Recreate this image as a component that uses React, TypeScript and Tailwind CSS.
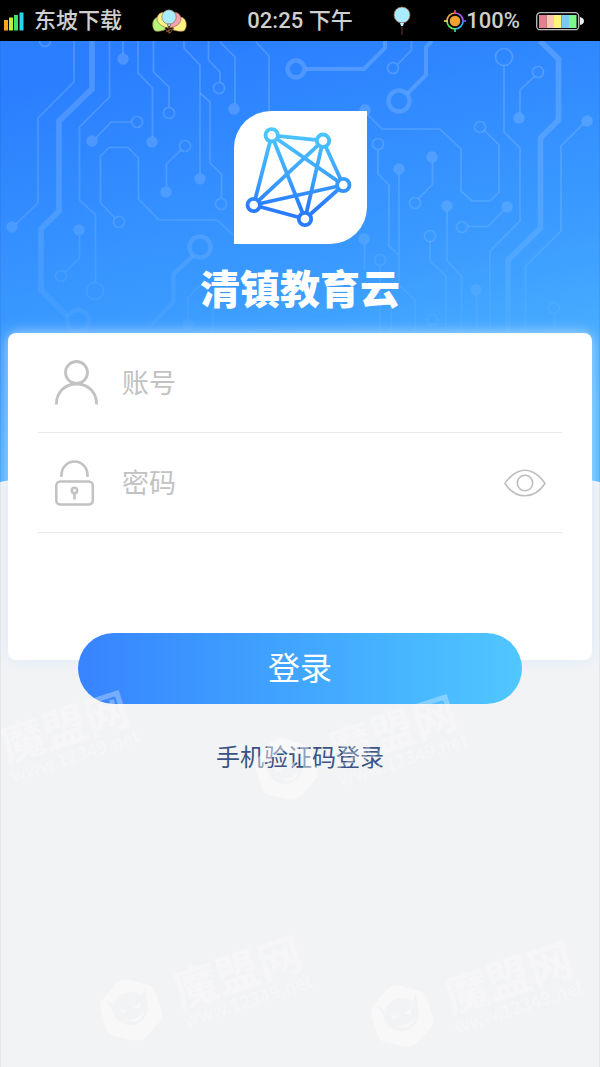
import { useState } from "react";

const traces = [
  "M74 41V82L38 118V203L16 224",
  "M109.500 41V97L79.500 127V200L95.500 215V282",
  "M123 41V54",
  "M138 41V73L152.500 88V137",
  "M153.500 41V72L169 87V107",
  "M131 122H111L96 138",
  "M184 41V48L200 65V174",
  "M200 93L210 102V163L221.500 174V198",
  "M208.500 41V60L220 72V82",
  "M220 42L235 57V104",
  "M256 42L269 56V112",
  "M181 150L166.500 164V186",
  "M115 218L100.500 203V156L109 147.500H128L138.500 158V199L159 220H217L233 235",
  "M79.500 236V258L65 272",
  "M200 285L188 298V320",
  "M213 306V333",
  "M411.500 41V50L398 64",
  "M367 114L382 129H440L461 149V191L472 201H490L499 192V145L484 130",
  "M504 66V132L520 148V221L490 251V333",
  "M534 77L520 90V113",
  "M583 124L561 146V231L525.500 266V333",
  "M378 150V174L389 185V246L399 255",
  "M399 174V285L415 300V333",
  "M432.500 162V184.500L418 199",
  "M447 211V261L461.500 276V333",
  "M503 211L488 226.500H468",
  "M430 241V261L446 276V333",
  "M476.500 295V333",
  "M554.500 314V333",
  "M364.500 244V270",
  "M380 266V333",
  "M391 300V333",
];

const wideTraces = [
  "M92 41V89L59 121V211L41 229V290L68 317",
  "M193 256L173.500 274V302L152 324",
  "M306 69H364L385 48V41",
  "M432 41L426 47V75L408 93",
  "M540 41L558.500 59V120L540.500 138V228L508 260V333",
];

const dots = [
  [12, 227], [123, 59], [152, 142], [92, 141], [200, 179], [234, 109], [166, 192],
  [79, 230], [188, 325], [365, 110], [519, 118], [587, 121], [399, 169], [432, 157],
  [447, 206], [507, 207], [476, 290], [364, 239],
];

const rings = [
  [45, 41, 5.5], [169, 113, 5.5], [137, 122, 5.5], [221, 204, 5.5], [219, 88, 5.5],
  [185, 146, 5.5], [119, 222, 5.5], [61, 276, 5.5], [95, 291, 8.5], [393, 68, 5.5],
  [480, 127, 5.5], [504, 57, 8.5], [538, 72, 5.5], [378, 144, 5.5], [415, 203, 5.5],
  [462, 227, 5.5], [430, 236, 5.5], [554, 308, 5.5], [380, 260, 5.5], [432, 320, 5.5],
];

const wideRings = [
  [78, 321, 11], [200, 247, 10.5], [296, 69, 8.5], [399, 101, 10.5],
];

const nodes = [[37.7, 24.3], [89, 29.7], [109.3, 74], [19.7, 94], [71, 108]];

const batteryCells = ["#e57f90", "#f9c6b4", "#fbf57c", "#7cc9f6", "#7cf58c"];

function CircuitBackground() {
  return (
    <svg
      className="absolute inset-x-0 top-0 h-[441px] w-full"
      viewBox="0 41 600 441"
      preserveAspectRatio="none"
      aria-hidden="true"
    >
      <defs>
        <linearGradient id="sky" gradientUnits="userSpaceOnUse" x1="200" y1="41" x2="300" y2="482">
          <stop offset="0" stopColor="#2a7eff" />
          <stop offset="0.55" stopColor="#3a9aff" />
          <stop offset="1" stopColor="#50b8ff" />
        </linearGradient>
        <linearGradient id="trace" gradientUnits="userSpaceOnUse" x1="0" y1="41" x2="0" y2="335">
          <stop offset="0" stopColor="#fff" stopOpacity="0.17" />
          <stop offset="0.6" stopColor="#fff" stopOpacity="0.12" />
          <stop offset="1" stopColor="#fff" stopOpacity="0.03" />
        </linearGradient>
      </defs>
      <path d="M0 41H600V482Q300 420 0 482Z" fill="url(#sky)" />
      <g fill="none" stroke="url(#trace)" strokeWidth="1.700">
        {traces.map((d) => <path key={d} d={d} />)}
        {rings.map(([x, y, r]) => <circle key={`${x}-${y}`} cx={x} cy={y} r={r} />)}
      </g>
      <g fill="none" stroke="url(#trace)">
        {wideTraces.map((d, i) => (
          <path key={d} d={d} strokeWidth={i === 0 || i === 4 ? 5.6 : 4} />
        ))}
        {wideRings.map(([x, y, r]) => (
          <circle key={x} cx={x} cy={y} r={r} strokeWidth="4.300" />
        ))}
      </g>
      <g fill="url(#trace)">
        {dots.map(([x, y]) => <circle key={`${x}-${y}`} cx={x} cy={y} r="5.700" />)}
      </g>
    </svg>
  );
}

function Logo() {
  return (
    <svg className="h-[133px] w-[133px]" viewBox="0 0 133 133" aria-hidden="true">
      <defs>
        <linearGradient id="mesh" gradientUnits="userSpaceOnUse" x1="0" y1="16" x2="0" y2="116">
          <stop offset="0" stopColor="#4ccaff" />
          <stop offset="0.5" stopColor="#3ba3ff" />
          <stop offset="0.8" stopColor="#2a7cff" />
          <stop offset="1" stopColor="#2a7cff" />
        </linearGradient>
      </defs>
      <path d="M37 0H133V96A37 37 0 0 1 96 133H0V37A37 37 0 0 1 37 0Z" fill="#fff" />
      <g stroke="url(#mesh)" strokeWidth="3.800">
        {nodes.map(([x1, y1], i) =>
          nodes.slice(i + 1).map(([x2, y2]) => (
            <line key={`${x1}-${x2}`} x1={x1} y1={y1} x2={x2} y2={y2} />
          ))
        )}
        {nodes.map(([x, y]) => <circle key={x} cx={x} cy={y} r="6.200" fill="#fff" />)}
      </g>
    </svg>
  );
}

function SignalIcon() {
  return (
    <svg className="h-5 w-5" viewBox="0 0 20 20" aria-hidden="true">
      <rect x="0" y="9" width="4" height="10.500" fill="#fba51d" />
      <rect x="5" y="6.500" width="4" height="13" fill="#c5ef2c" />
      <rect x="10" y="4" width="4" height="15.500" fill="#3be56b" />
      <rect x="15.500" y="1.500" width="4" height="18" fill="#28d4ee" />
    </svg>
  );
}

function BalloonBunch() {
  return (
    <svg className="h-[26px] w-[35px]" viewBox="0 0 35 26" aria-hidden="true">
      <g stroke="#8a5a34" strokeWidth="0.600">
        <path d="M13 22C9 23 6 24 3 23C-1 19 0 10 6 9C12 9 14 16 13 22Z" fill="#b4f57c" />
        <path d="M21 22C25 23 28 24 32 23C36 19 35 10 29 9C23 9 20 16 21 22Z" fill="#fdf087" />
        <path d="M16 20C12 19 5 17 5 10C6 4 13 2 17 7Z" fill="#fdf38a" />
        <path d="M18 20C22 19 29 17 29 10C28 4 21 2 17 7Z" fill="#f5a3b3" />
        <circle cx="17" cy="9" r="7.200" fill="#a8ecff" />
        <path d="M15.500 16H18.500V18H15.500Z" fill="#a8ecff" />
        <path d="M17 18V25.500M13 21L18 25L22 20M14 24L20 21" fill="none" strokeWidth="1" />
      </g>
    </svg>
  );
}

function Balloon() {
  return (
    <svg className="ml-10 h-[30px] w-[18px]" viewBox="0 0 18 30" aria-hidden="true">
      <path d="M9 18V29" stroke="#6b3a1e" strokeWidth="1" />
      <circle cx="9" cy="9" r="8" fill="#a8ecff" stroke="#a0643f" strokeWidth="0.800" />
      <path d="M7 17H11L10 20H8Z" fill="#c4f0fa" />
    </svg>
  );
}

function LocationIcon() {
  return (
    <svg className="h-[22px] w-[22px]" viewBox="0 0 22 22" fill="none" aria-hidden="true">
      <g strokeWidth="1.700">
        <path d="M11 3A8 8 0 0 1 19 11" stroke="#b45cf0" />
        <path d="M19 11A8 8 0 0 1 11 19" stroke="#37b7e8" />
        <path d="M11 19A8 8 0 0 1 3 11" stroke="#6fe05a" />
        <path d="M3 11A8 8 0 0 1 11 3" stroke="#f0a04a" />
        <path d="M11 0V4" stroke="#ef4a5c" />
        <path d="M18 11H22" stroke="#6a62f2" />
        <path d="M11 18V22" stroke="#3fe08c" />
        <path d="M0 11H4" stroke="#e3e040" />
      </g>
      <circle cx="11" cy="11" r="5.300" fill="#f6a02c" />
    </svg>
  );
}

function BatteryIcon() {
  return (
    <svg className="mr-4 ml-4 h-5 w-12" viewBox="0 0 48 20" aria-hidden="true">
      <rect x="0.700" y="1.700" width="42" height="17" rx="3.500" fill="none" stroke="#bdbdbd" strokeWidth="1.300" />
      {batteryCells.map((color, i) => (
        <rect key={color} x={3 + i * 7.5} y="4" width="7.500" height="13" fill={color} />
      ))}
      <path d="M44 6Q48 7 48 10Q48 13 44 14Z" fill="#eee" />
    </svg>
  );
}

function StatusBar() {
  return (
    <header className="flex h-[41px] items-center bg-black font-['Roboto','Noto_Sans_CJK_SC',sans-serif] text-[22px] font-medium text-[#cfcfcf]">
      <div className="flex flex-1 items-center">
        <div className="ml-1">
          <SignalIcon />
        </div>
        <span className="mr-[30px] ml-2.5">东坡下载</span>
        <BalloonBunch />
      </div>
      <time>02:25 下午</time>
      <div className="flex flex-1 items-center">
        <Balloon />
        <div className="ml-auto flex items-center">
          <LocationIcon />
          <span>100%</span>
        </div>
        <BatteryIcon />
      </div>
    </header>
  );
}

function UserIcon() {
  return (
    <svg className="h-[45px] w-11" viewBox="0 0 44 45" fill="none" stroke="#c2c2c2" strokeWidth="2.800" aria-hidden="true">
      <circle cx="22.500" cy="12.500" r="11" />
      <path d="M2.400 44.500C2.400 32 11 24 22.500 24S42.600 32 42.600 44.500" />
    </svg>
  );
}

function LockIcon() {
  return (
    <svg className="h-[46px] w-11" viewBox="0 0 44 46" fill="none" stroke="#c2c2c2" strokeWidth="2.500" aria-hidden="true">
      <path d="M7.500 17V15A13 13.500 0 0 1 33.500 15V17" />
      <rect x="2.300" y="21.500" width="36.500" height="23" rx="4" />
      <circle cx="20.500" cy="30.500" r="2.700" />
      <path d="M20.500 33V39.500" />
    </svg>
  );
}

function EyeIcon() {
  return (
    <svg className="h-7 w-[42px]" viewBox="0 0 42 28" fill="none" stroke="#bdbdbd" strokeWidth="1.600" aria-hidden="true">
      <path d="M1 14.500C2 12.500 10 1.200 21 1.200S40 12.500 41 14.500C39 17.500 32 26.800 21 26.800S3 17.500 1 14.500Z" />
      <circle cx="21" cy="14" r="7.700" />
    </svg>
  );
}

function Watermark({ x, y }: { x: number; y: number }) {
  return (
    <g transform={`translate(${x} ${y}) rotate(-18)`} fill="#fff">
      <path
        fillOpacity="0.450"
        fillRule="evenodd"
        d="M-6 -30Q0 -33 6 -30L25 -18Q29 -14 29 -8V12Q28 17 24 20L6 30Q0 33 -6 30L-24 20Q-28 17 -29 12V-8Q-29 -14 -25 -18ZM-15 -10L-20 -18L-18 -3A18 18 0 1 0 18 -3L20 -18L15 -10A18 18 0 0 0 -15 -10Z"
      />
      <path fillOpacity="0.450" d="M-11 -5L-3 -1L-9 1ZM11 -5L3 -1L9 1ZM-11 6Q0 13 11 6Q5 19 -11 6Z" />
      <g fillOpacity="0.320" fontFamily="Noto Sans CJK SC, sans-serif">
        <text x="47" y="13" fontSize="44" fontWeight="700">魔盟网</text>
        <text x="47" y="34" fontSize="18" fontWeight="500">www.12349.net</text>
      </g>
    </g>
  );
}

export default function App() {
  const [showPassword, setShowPassword] = useState(false);

  return (
    <div className="relative flex min-h-screen flex-col overflow-hidden bg-[#f2f3f5] font-['Noto_Sans_CJK_SC',sans-serif]">
      <StatusBar />

      <main className="relative flex-1">
        <CircuitBackground />

        <div className="relative flex flex-col items-center pt-[70px]">
          <Logo />
          <h1 className="mt-[19px] text-[40px] leading-12 font-black text-white">清镇教育云</h1>
        </div>

        <form className="relative mt-[22px]" onSubmit={(e) => e.preventDefault()}>
          <div className="mx-2 rounded-lg bg-white px-[30px] pb-[127px] shadow-[0_0_14px_rgba(214,232,255,0.8)]">
            <div className="flex h-[100px] items-center gap-6 border-b border-[#e9e9e9] pl-4">
              <label htmlFor="account" aria-label="账号">
                <UserIcon />
              </label>
              <input
                id="account"
                type="text"
                placeholder="账号"
                className="min-w-0 flex-1 text-[27px] text-gray-700 outline-none placeholder:text-[#c2c2c2]"
              />
            </div>
            <div className="flex h-[100px] items-center gap-6 border-b border-[#e9e9e9] pr-4 pl-4">
              <label htmlFor="password" aria-label="密码">
                <LockIcon />
              </label>
              <input
                id="password"
                type={showPassword ? "text" : "password"}
                placeholder="密码"
                className="min-w-0 flex-1 text-[27px] text-gray-700 outline-none placeholder:text-[#c2c2c2]"
              />
              <button type="button" aria-label="显示密码" onClick={() => setShowPassword(!showPassword)}>
                <EyeIcon />
              </button>
            </div>
          </div>

          <div className="-mt-[27px] px-[78px]">
            <button
              type="submit"
              className="relative h-[71px] w-full rounded-full bg-linear-to-r from-[#3883ff] to-[#50c7ff] pb-1.5 text-[32px] text-white"
            >
              登录
            </button>
          </div>
        </form>

        <div className="mt-[34px] text-center">
          <a href="#sms" className="text-[24px] text-[#3b5384]">手机验证码登录</a>
        </div>
      </main>

      {/* Watermark layer */}
      <div className="pointer-events-none absolute inset-0 border-x border-black/5">
        <svg className="h-[1067px] w-[600px]" viewBox="0 0 600 1067" aria-hidden="true">
          <Watermark x={-43} y={765} />
          <Watermark x={285} y={769} />
          <Watermark x={130} y={1010} />
          <Watermark x={401} y={1016} />
        </svg>
      </div>
    </div>
  );
}
